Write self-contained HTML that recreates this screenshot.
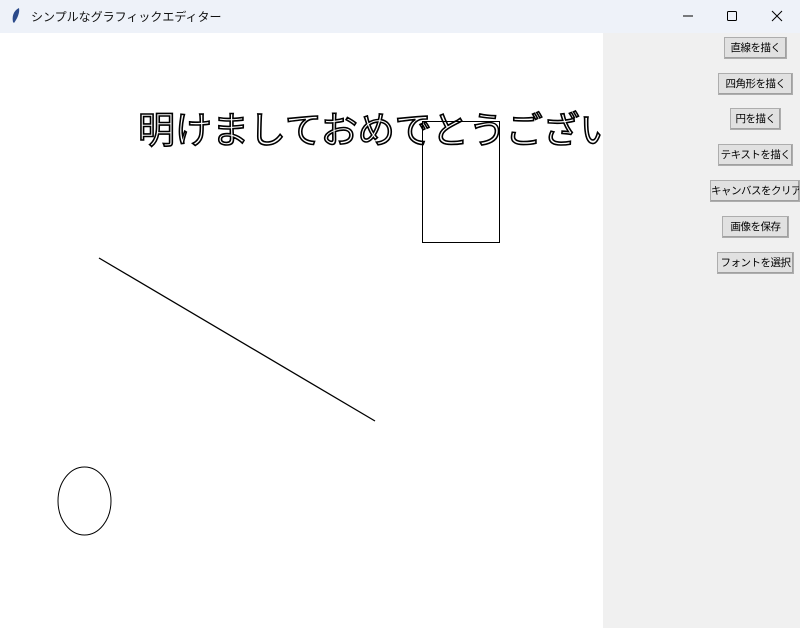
<html><head><style>
body{margin:0;width:800px;height:628px;overflow:hidden;background:#f0f0f0;font-family:"Liberation Sans","Noto Sans CJK JP",sans-serif;position:relative}
.tb{position:absolute;left:0;top:0;width:800px;height:33px;background:#eef2f9}
.tt{position:absolute;left:31px;top:8px;font-size:12px;color:#111}
.cv{position:absolute;left:0;top:33px;width:603px;height:595px;background:#fff;overflow:hidden}
.side{position:absolute;left:603px;top:33px;width:197px;height:595px;background:#f0f0f0}
.b{position:absolute;height:22px;line-height:21px;font-size:10.5px;letter-spacing:-0.5px;border:1px solid #adadad;background:#e1e1e1;box-shadow:inset -1px -1px #a0a0a0;text-align:center;box-sizing:border-box;color:#000;padding:0;white-space:nowrap;overflow:hidden}
.txt{position:absolute;left:138px;top:67px;font-size:37px;white-space:nowrap;color:#fff;-webkit-text-stroke:1.6px #000;letter-spacing:0px}
</style></head><body>
<div class="tb">
<svg style="position:absolute;left:10px;top:7px" width="12" height="18"><path d="M9 1 C3 4 2 10 3 15 L4 16 C7 12 10 6 9 1Z" fill="#2b4a8a"/></svg>
<div class="tt">シンプルなグラフィックエディター</div>
<svg style="position:absolute;left:680px;top:8px" width="110" height="16"><path d="M3 8H13" stroke="#000"/><rect x="47.5" y="3.5" width="9" height="9" fill="none" stroke="#000" rx="1"/><path d="M92 3L102 13M102 3L92 13" stroke="#000"/></svg>
</div>
<div class="cv">
<div class="txt">明けましておめでとうござい</div>
<svg width="603" height="595" style="position:absolute;left:0;top:0">
<rect x="422.5" y="88.5" width="77" height="121" fill="none" stroke="#000"/>
<line x1="99" y1="225" x2="375" y2="388" stroke="#000" stroke-width="1.3"/>
<ellipse cx="84.5" cy="468" rx="26.5" ry="34" fill="none" stroke="#000"/>
</svg>
</div>
<div class="side"></div>
<div class="b" style="left:724px;top:37px;width:63px">直線を描く</div>
<div class="b" style="left:718px;top:73px;width:75px">四角形を描く</div>
<div class="b" style="left:730px;top:108px;width:51px">円を描く</div>
<div class="b" style="left:718px;top:144px;width:75px">テキストを描く</div>
<div class="b" style="left:710px;top:180px;width:90px">キャンバスをクリア</div>
<div class="b" style="left:722px;top:216px;width:67px">画像を保存</div>
<div class="b" style="left:717px;top:252px;width:77px">フォントを選択</div>
</body></html>
